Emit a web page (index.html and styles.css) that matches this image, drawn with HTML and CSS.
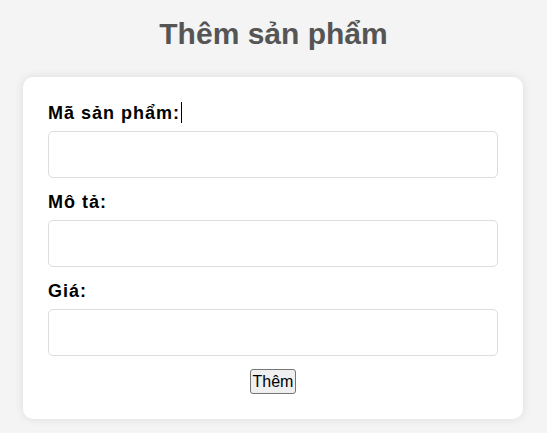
FILE: index.html
```html
<!DOCTYPE html>
<html lang="vi">
<head>
<meta charset="utf-8">
<title>Thêm sản phẩm</title>
<link rel="stylesheet" href="styles.css">
</head>
<body>
<h1 class="title">Thêm sản phẩm</h1>
<form class="card">
  <label class="label" for="ma">Mã sản phẩm:<span class="caret"></span></label>
  <input class="field" id="ma" type="text">
  <label class="label" for="mota">Mô tả:</label>
  <input class="field" id="mota" type="text">
  <label class="label" for="gia">Giá:</label>
  <input class="field" id="gia" type="text">
  <div class="actions"><button class="btn" type="button">Thêm</button></div>
</form>
</body>
</html>
```
FILE: styles.css
```css
body {
  margin: 0;
  padding: 8px 23px;
  background: #f4f4f4;
  font-family: "Liberation Sans", Arial, sans-serif;
}
.title {
  text-align: center;
  color: #555;
  font-size: 30px;
  margin: 9px 0 26px;
}
.card {
  display: flex;
  flex-direction: column;
  width: 500px;
  box-sizing: border-box;
  padding: 25px;
  background: #fff;
  border-radius: 10px;
  box-shadow: 0 0 10px rgba(0,0,0,0.1);
}
.label {
  font-weight: bold;
  font-size: 18px;
  letter-spacing: 1px;
  color: #000;
  margin-bottom: 7px;
}
.caret {
  display: inline-block;
  width: 1px;
  height: 21px;
  margin-left: 1px;
  background: #000;
  vertical-align: -4px;
}
.field {
  height: 47px;
  box-sizing: border-box;
  border: 1px solid #ddd;
  border-radius: 5px;
  margin: 0 0 14px;
  padding: 8px;
  font-size: 16px;
}
.actions {
  display: flex;
  justify-content: center;
  margin-top: -1px;
}
.btn {
  font-family: "Liberation Sans", Arial, sans-serif;
  font-size: 16px;
  height: 25px;
  padding: 0 2px;
  border: 1px solid #767676;
  border-radius: 3px;
  background: #efefef;
  color: #000;
}
```
